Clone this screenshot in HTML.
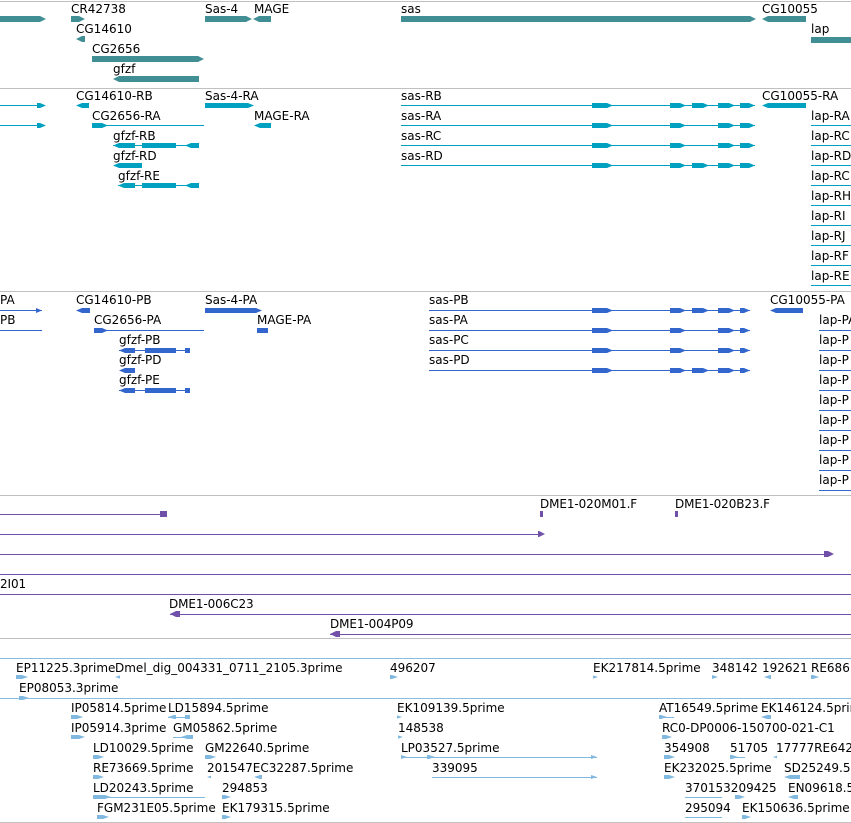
<!DOCTYPE html>
<html><head><meta charset="utf-8"><style>
body{margin:0;width:851px;height:823px;background:#fff;position:relative;overflow:hidden;font-family:"DejaVu Sans","Liberation Sans",sans-serif;font-size:12px;color:#000}
div{position:absolute}
.t{white-space:nowrap;line-height:14px}
.s{font-size:12px;letter-spacing:-0.1px}
.g{height:1px;background:#c0c0c0;left:0;width:851px}
.k{height:1px;background:#88bde0;left:0;width:851px}
.a{background:#418f94;height:6px}
.c{background:#00a0c0}
.d{background:#3366cc}
.p{background:#7050a8}
.l{background:#80b8e0}
.r{clip-path:polygon(0 0,calc(100% - 6px) 0,100% 50%,calc(100% - 6px) 100%,0 100%)}
.f{clip-path:polygon(6px 0,100% 0,100% 100%,6px 100%,0 50%)}
</style></head><body>
<div class="g" style="top:1px"></div>
<div class="g" style="top:88px"></div>
<div class="g" style="top:291px"></div>
<div class="g" style="top:495px"></div>
<div class="g" style="top:638px"></div>
<div class="k" style="top:658px"></div>
<div class="k" style="top:698px"></div>
<div class="g" style="top:822px"></div>

<!-- section 1 -->
<div class="a r" style="left:0;top:16px;width:46px"></div>
<div class="t" style="left:71px;top:2px">CR42738</div><div class="a r" style="left:71px;top:16px;width:14px"></div>
<div class="t" style="left:76px;top:22px">CG14610</div><div class="a f" style="left:76px;top:36px;width:9px"></div>
<div class="t" style="left:92px;top:42px">CG2656</div><div class="a r" style="left:92px;top:56px;width:112px"></div>
<div class="t" style="left:113px;top:62px">gfzf</div><div class="a f" style="left:113px;top:76px;width:86px"></div>
<div class="t" style="left:205px;top:2px">Sas-4</div><div class="a r" style="left:205px;top:16px;width:47px"></div>
<div class="t" style="left:254px;top:2px">MAGE</div><div class="a f" style="left:253px;top:16px;width:18px"></div>
<div class="t" style="left:401px;top:2px">sas</div><div class="a r" style="left:401px;top:16px;width:355px"></div>
<div class="t" style="left:762px;top:2px">CG10055</div><div class="a f" style="left:762px;top:16px;width:44px"></div>
<div class="t" style="left:811px;top:22px">lap</div><div class="a" style="left:811px;top:37px;width:40px"></div>

<!-- section 2 -->
<div class="c" style="left:0;top:105px;width:42px;height:1px"></div><div class="c r" style="left:37px;top:103px;width:9px;height:5px"></div>
<div class="c" style="left:0;top:125px;width:42px;height:1px"></div><div class="c r" style="left:37px;top:123px;width:9px;height:5px"></div>
<div class="t" style="left:76px;top:89px">CG14610-RB</div><div class="c f" style="left:76px;top:103px;width:13px;height:5px"></div>
<div class="t" style="left:205px;top:89px">Sas-4-RA</div><div class="c r" style="left:205px;top:103px;width:49px;height:5px"></div>
<div class="t" style="left:92px;top:109px">CG2656-RA</div><div class="c" style="left:92px;top:125px;width:112px;height:1px"></div><div class="c r" style="left:92px;top:123px;width:16px;height:5px"></div>
<div class="t" style="left:254px;top:109px">MAGE-RA</div><div class="c f" style="left:254px;top:123px;width:17px;height:5px"></div>
<div class="t" style="left:113px;top:129px">gfzf-RB</div><div class="c" style="left:113px;top:145px;width:86px;height:1px"></div><div class="c f" style="left:113px;top:143px;width:22px;height:5px"></div><div class="c" style="left:142px;top:143px;width:34px;height:5px"></div><div class="c f" style="left:185px;top:143px;width:14px;height:5px"></div>
<div class="t" style="left:113px;top:149px">gfzf-RD</div><div class="c f" style="left:113px;top:163px;width:29px;height:5px"></div>
<div class="t" style="left:118px;top:169px">gfzf-RE</div><div class="c" style="left:118px;top:185px;width:81px;height:1px"></div><div class="c f" style="left:118px;top:183px;width:17px;height:5px"></div><div class="c" style="left:142px;top:183px;width:34px;height:5px"></div><div class="c f" style="left:185px;top:183px;width:14px;height:5px"></div>
<div class="t" style="left:401px;top:89px">sas-RB</div>
<div class="t" style="left:401px;top:109px">sas-RA</div>
<div class="t" style="left:401px;top:129px">sas-RC</div>
<div class="t" style="left:401px;top:149px">sas-RD</div>
<div class="c" style="left:401px;top:105px;width:354px;height:1px"></div>
<div class="c" style="left:401px;top:125px;width:354px;height:1px"></div>
<div class="c" style="left:401px;top:145px;width:354px;height:1px"></div>
<div class="c" style="left:401px;top:165px;width:354px;height:1px"></div>
<div class="c r" style="left:592px;top:103px;width:21px;height:5px"></div><div class="c r" style="left:592px;top:123px;width:21px;height:5px"></div><div class="c r" style="left:592px;top:143px;width:21px;height:5px"></div><div class="c r" style="left:592px;top:163px;width:21px;height:5px"></div>
<div class="c r" style="left:670px;top:103px;width:16px;height:5px"></div><div class="c r" style="left:670px;top:123px;width:16px;height:5px"></div><div class="c r" style="left:670px;top:143px;width:16px;height:5px"></div><div class="c r" style="left:670px;top:163px;width:16px;height:5px"></div>
<div class="c r" style="left:692px;top:103px;width:17px;height:5px"></div><div class="c r" style="left:692px;top:163px;width:17px;height:5px"></div>
<div class="c r" style="left:718px;top:103px;width:17px;height:5px"></div><div class="c r" style="left:718px;top:123px;width:17px;height:5px"></div><div class="c r" style="left:718px;top:143px;width:17px;height:5px"></div><div class="c r" style="left:718px;top:163px;width:17px;height:5px"></div>
<div class="c r" style="left:740px;top:103px;width:15px;height:5px"></div><div class="c r" style="left:740px;top:123px;width:15px;height:5px"></div><div class="c r" style="left:740px;top:143px;width:15px;height:5px"></div><div class="c r" style="left:740px;top:163px;width:15px;height:5px"></div>
<div class="t" style="left:762px;top:89px">CG10055-RA</div><div class="c f" style="left:762px;top:103px;width:44px;height:5px"></div>
<div class="t" style="left:811px;top:109px">lap-RA</div><div class="c" style="left:811px;top:125px;width:40px;height:1px"></div>
<div class="t" style="left:811px;top:129px">lap-RC</div><div class="c" style="left:811px;top:145px;width:40px;height:1px"></div>
<div class="t" style="left:811px;top:149px">lap-RD</div><div class="c" style="left:811px;top:165px;width:40px;height:1px"></div>
<div class="t" style="left:811px;top:169px">lap-RC</div><div class="c" style="left:811px;top:185px;width:40px;height:1px"></div>
<div class="t" style="left:811px;top:189px">lap-RH</div><div class="c" style="left:811px;top:205px;width:40px;height:1px"></div>
<div class="t" style="left:811px;top:209px">lap-RI</div><div class="c" style="left:811px;top:225px;width:40px;height:1px"></div>
<div class="t" style="left:811px;top:229px">lap-RJ</div><div class="c" style="left:811px;top:245px;width:40px;height:1px"></div>
<div class="t" style="left:811px;top:249px">lap-RF</div><div class="c" style="left:811px;top:265px;width:40px;height:1px"></div>
<div class="t" style="left:811px;top:269px">lap-RE</div><div class="c" style="left:811px;top:285px;width:40px;height:1px"></div>

<!-- section 3 -->
<div class="t" style="left:0;top:293px">PA</div><div class="d" style="left:0;top:310px;width:42px;height:1px"></div><div class="d r" style="left:36px;top:308px;width:6px;height:5px"></div>
<div class="t" style="left:0;top:313px">PB</div><div class="d" style="left:0;top:330px;width:42px;height:1px"></div>
<div class="t" style="left:76px;top:293px">CG14610-PB</div><div class="d f" style="left:76px;top:308px;width:14px;height:5px"></div>
<div class="t" style="left:205px;top:293px">Sas-4-PA</div><div class="d r" style="left:205px;top:308px;width:57px;height:5px"></div>
<div class="t" style="left:94px;top:313px">CG2656-PA</div><div class="d" style="left:94px;top:330px;width:110px;height:1px"></div><div class="d r" style="left:94px;top:328px;width:14px;height:5px"></div>
<div class="t" style="left:257px;top:313px">MAGE-PA</div><div class="d" style="left:257px;top:328px;width:11px;height:5px"></div>
<div class="t" style="left:119px;top:333px">gfzf-PB</div><div class="d" style="left:119px;top:350px;width:71px;height:1px"></div><div class="d f" style="left:119px;top:348px;width:16px;height:5px"></div><div class="d" style="left:145px;top:348px;width:31px;height:5px"></div><div class="d" style="left:185px;top:348px;width:5px;height:5px"></div>
<div class="t" style="left:119px;top:353px">gfzf-PD</div><div class="d f" style="left:119px;top:368px;width:16px;height:5px"></div>
<div class="t" style="left:119px;top:373px">gfzf-PE</div><div class="d" style="left:119px;top:390px;width:71px;height:1px"></div><div class="d f" style="left:119px;top:388px;width:16px;height:5px"></div><div class="d" style="left:145px;top:388px;width:31px;height:5px"></div><div class="d" style="left:185px;top:388px;width:5px;height:5px"></div>
<div class="t" style="left:429px;top:293px">sas-PB</div>
<div class="t" style="left:429px;top:313px">sas-PA</div>
<div class="t" style="left:429px;top:333px">sas-PC</div>
<div class="t" style="left:429px;top:353px">sas-PD</div>
<div class="d" style="left:429px;top:310px;width:321px;height:1px"></div>
<div class="d" style="left:429px;top:330px;width:321px;height:1px"></div>
<div class="d" style="left:429px;top:350px;width:321px;height:1px"></div>
<div class="d" style="left:429px;top:370px;width:321px;height:1px"></div>
<div class="d r" style="left:592px;top:308px;width:21px;height:5px"></div><div class="d r" style="left:592px;top:328px;width:21px;height:5px"></div><div class="d r" style="left:592px;top:348px;width:21px;height:5px"></div><div class="d r" style="left:592px;top:368px;width:21px;height:5px"></div>
<div class="d r" style="left:670px;top:308px;width:16px;height:5px"></div><div class="d r" style="left:670px;top:328px;width:16px;height:5px"></div><div class="d r" style="left:670px;top:348px;width:16px;height:5px"></div><div class="d r" style="left:670px;top:368px;width:16px;height:5px"></div>
<div class="d r" style="left:692px;top:308px;width:17px;height:5px"></div><div class="d r" style="left:692px;top:368px;width:17px;height:5px"></div>
<div class="d r" style="left:718px;top:308px;width:17px;height:5px"></div><div class="d r" style="left:718px;top:328px;width:17px;height:5px"></div><div class="d r" style="left:718px;top:348px;width:17px;height:5px"></div><div class="d r" style="left:718px;top:368px;width:17px;height:5px"></div>
<div class="d r" style="left:740px;top:308px;width:10px;height:5px"></div><div class="d r" style="left:740px;top:328px;width:10px;height:5px"></div><div class="d r" style="left:740px;top:348px;width:10px;height:5px"></div><div class="d r" style="left:740px;top:368px;width:10px;height:5px"></div>
<div class="t" style="left:770px;top:293px">CG10055-PA</div><div class="d f" style="left:770px;top:308px;width:33px;height:5px"></div>
<div class="t" style="left:819px;top:313px">lap-PA</div><div class="d" style="left:819px;top:330px;width:32px;height:1px"></div>
<div class="t" style="left:819px;top:333px">lap-P</div><div class="d" style="left:819px;top:350px;width:32px;height:1px"></div>
<div class="t" style="left:819px;top:353px">lap-P</div><div class="d" style="left:819px;top:370px;width:32px;height:1px"></div>
<div class="t" style="left:819px;top:373px">lap-P</div><div class="d" style="left:819px;top:390px;width:32px;height:1px"></div>
<div class="t" style="left:819px;top:393px">lap-P</div><div class="d" style="left:819px;top:410px;width:32px;height:1px"></div>
<div class="t" style="left:819px;top:413px">lap-P</div><div class="d" style="left:819px;top:430px;width:32px;height:1px"></div>
<div class="t" style="left:819px;top:433px">lap-P</div><div class="d" style="left:819px;top:450px;width:32px;height:1px"></div>
<div class="t" style="left:819px;top:453px">lap-P</div><div class="d" style="left:819px;top:470px;width:32px;height:1px"></div>
<div class="t" style="left:819px;top:473px">lap-P</div><div class="d" style="left:819px;top:490px;width:32px;height:1px"></div>

<!-- section 4 -->
<div class="p" style="left:0;top:514px;width:166px;height:1px"></div><div class="p" style="left:160px;top:511px;width:7px;height:6px"></div>
<div class="p" style="left:0;top:534px;width:540px;height:1px"></div><div class="p r" style="left:538px;top:531px;width:7px;height:6px"></div>
<div class="p" style="left:0;top:554px;width:830px;height:1px"></div><div class="p r" style="left:824px;top:551px;width:10px;height:6px"></div>
<div class="p" style="left:0;top:574px;width:851px;height:1px"></div>
<div class="t s" style="left:0;top:577px">2I01</div>
<div class="p" style="left:0;top:594px;width:851px;height:1px"></div>
<div class="t s" style="left:169px;top:597px">DME1-006C23</div><div class="p" style="left:170px;top:614px;width:681px;height:1px"></div><div class="p f" style="left:170px;top:611px;width:10px;height:6px"></div>
<div class="t s" style="left:330px;top:617px">DME1-004P09</div><div class="p" style="left:330px;top:634px;width:521px;height:1px"></div><div class="p f" style="left:330px;top:631px;width:10px;height:6px"></div>
<div class="t s" style="left:540px;top:497px">DME1-020M01.F</div><div class="p" style="left:540px;top:511px;width:3px;height:6px"></div>
<div class="t s" style="left:675px;top:497px">DME1-020B23.F</div><div class="p" style="left:675px;top:511px;width:3px;height:6px"></div>

<!-- section 5 -->
<div class="t" style="left:16px;top:661px">EP11225.3prime</div><div class="l r" style="left:16px;top:675px;width:12px;height:4px"></div>
<div class="t" style="left:115px;top:661px">Dmel_dig_004331_0711_2105.3prime</div><div class="l f" style="left:115px;top:675px;width:5px;height:4px"></div>
<div class="t" style="left:390px;top:661px">496207</div><div class="l r" style="left:390px;top:675px;width:8px;height:4px"></div>
<div class="t" style="left:593px;top:661px">EK217814.5prime</div><div class="l r" style="left:593px;top:675px;width:5px;height:4px"></div>
<div class="t" style="left:712px;top:661px">348142</div><div class="l r" style="left:712px;top:675px;width:6px;height:4px"></div>
<div class="t" style="left:762px;top:661px">192621</div><div class="l f" style="left:764px;top:675px;width:7px;height:4px"></div>
<div class="t" style="left:811px;top:661px">RE686</div><div class="l r" style="left:811px;top:675px;width:8px;height:4px"></div>
<div class="t" style="left:19px;top:681px">EP08053.3prime</div><div class="l r" style="left:19px;top:696px;width:10px;height:4px"></div>
<div class="t" style="left:71px;top:701px">IP05814.5prime</div><div class="l r" style="left:71px;top:715px;width:12px;height:4px"></div>
<div class="t" style="left:168px;top:701px">LD15894.5prime</div><div class="l" style="left:168px;top:717px;width:22px;height:1px"></div><div class="l f" style="left:168px;top:715px;width:8px;height:4px"></div><div class="l" style="left:185px;top:715px;width:5px;height:4px"></div>
<div class="t" style="left:397px;top:701px">EK109139.5prime</div><div class="l r" style="left:397px;top:715px;width:5px;height:4px"></div>
<div class="t" style="left:659px;top:701px">AT16549.5prime</div><div class="l" style="left:659px;top:717px;width:15px;height:1px"></div><div class="l r" style="left:659px;top:715px;width:8px;height:4px"></div>
<div class="t" style="left:761px;top:701px">EK146124.5prime</div><div class="l f" style="left:761px;top:715px;width:10px;height:4px"></div>
<div class="t" style="left:71px;top:721px">IP05914.3prime</div><div class="l r" style="left:71px;top:735px;width:14px;height:4px"></div>
<div class="t" style="left:173px;top:721px">GM05862.5prime</div><div class="l" style="left:173px;top:737px;width:20px;height:1px"></div><div class="l f" style="left:181px;top:735px;width:12px;height:4px"></div>
<div class="t" style="left:398px;top:721px">148538</div><div class="l r" style="left:398px;top:735px;width:5px;height:4px"></div>
<div class="t" style="left:662px;top:721px">RC0-DP0006-150700-021-C1</div><div class="l r" style="left:662px;top:735px;width:10px;height:4px"></div>
<div class="t" style="left:93px;top:741px">LD10029.5prime</div><div class="l r" style="left:93px;top:755px;width:11px;height:4px"></div>
<div class="t" style="left:205px;top:741px">GM22640.5prime</div><div class="l r" style="left:205px;top:755px;width:11px;height:4px"></div>
<div class="t" style="left:401px;top:741px">LP03527.5prime</div><div class="l" style="left:401px;top:757px;width:196px;height:1px"></div><div class="l r" style="left:401px;top:755px;width:6px;height:4px"></div><div class="l r" style="left:427px;top:755px;width:8px;height:4px"></div><div class="l r" style="left:591px;top:755px;width:6px;height:4px"></div>
<div class="t" style="left:664px;top:741px">354908</div><div class="l r" style="left:664px;top:755px;width:11px;height:4px"></div>
<div class="t" style="left:730px;top:741px">51705</div><div class="l" style="left:730px;top:757px;width:15px;height:1px"></div><div class="l r" style="left:730px;top:755px;width:8px;height:4px"></div>
<div class="t" style="left:776px;top:741px">17777RE642</div><div class="l f" style="left:773px;top:755px;width:4px;height:4px"></div>
<div class="t" style="left:93px;top:761px">RE73669.5prime</div><div class="l r" style="left:93px;top:775px;width:11px;height:4px"></div>
<div class="t" style="left:207px;top:761px">201547EC32287.5prime</div><div class="l f" style="left:207px;top:775px;width:4px;height:4px"></div><div class="l f" style="left:254px;top:775px;width:8px;height:4px"></div>
<div class="t" style="left:432px;top:761px">339095</div><div class="l" style="left:432px;top:777px;width:165px;height:1px"></div><div class="l r" style="left:591px;top:775px;width:6px;height:4px"></div>
<div class="t" style="left:664px;top:761px">EK232025.5prime</div><div class="l r" style="left:664px;top:775px;width:11px;height:4px"></div>
<div class="t" style="left:784px;top:761px">SD25249.5</div><div class="l f" style="left:784px;top:775px;width:16px;height:4px"></div>
<div class="t" style="left:93px;top:781px">LD20243.5prime</div><div class="l" style="left:93px;top:797px;width:112px;height:1px"></div><div class="l r" style="left:93px;top:795px;width:18px;height:4px"></div>
<div class="t" style="left:222px;top:781px">294853</div><div class="l r" style="left:222px;top:795px;width:9px;height:4px"></div>
<div class="t" style="left:685px;top:781px">370153209425</div><div class="l" style="left:685px;top:797px;width:37px;height:1px"></div><div class="l r" style="left:735px;top:795px;width:10px;height:4px"></div>
<div class="t" style="left:788px;top:781px">EN09618.5</div><div class="l f" style="left:788px;top:795px;width:10px;height:4px"></div>
<div class="t" style="left:97px;top:801px">FGM231E05.5prime</div><div class="l r" style="left:97px;top:815px;width:12px;height:4px"></div>
<div class="t" style="left:222px;top:801px">EK179315.5prime</div><div class="l r" style="left:222px;top:815px;width:9px;height:4px"></div>
<div class="t" style="left:685px;top:801px">295094</div><div class="l" style="left:685px;top:817px;width:37px;height:1px"></div>
<div class="t" style="left:742px;top:801px">EK150636.5prime</div><div class="l r" style="left:742px;top:815px;width:9px;height:4px"></div>
</body></html>
